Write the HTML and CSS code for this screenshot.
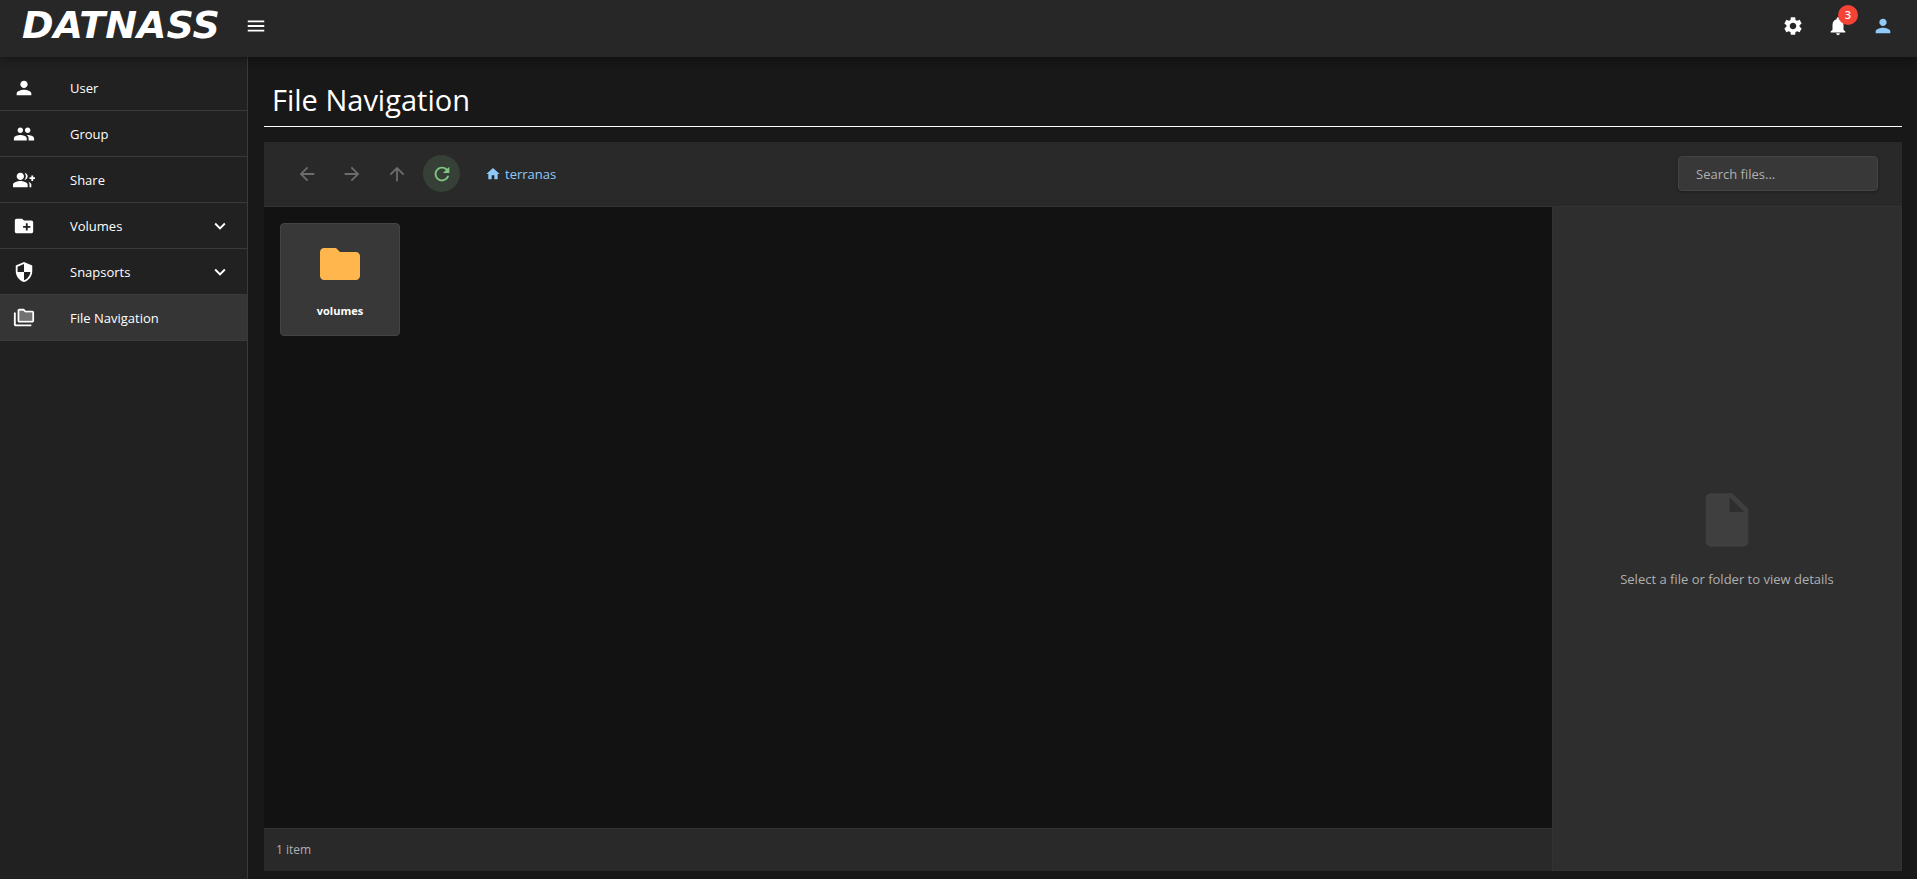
FILE: index.html
```
<!DOCTYPE html>
<html lang="en">
<head>
    <meta charset="UTF-8">
    <title>File Navigation</title>
    <link rel="stylesheet" href="styles.css">
</head>
<body>
    <header class="topbar">
        <a class="logo" href="#">DATNASS</a>
        <button type="button" class="icon-btn" aria-label="Toggle menu">
            <svg viewBox="0 0 24 24"><path d="M3 18h18v-2H3zm0-5h18v-2H3zm0-7v2h18V6z"/></svg>
        </button>
        <div class="topbar-actions">
            <button type="button" class="icon-btn" aria-label="Settings">
                <svg viewBox="0 0 24 24"><path d="M19.14 12.94c.04-.3.06-.61.06-.94 0-.32-.02-.64-.07-.94l2.03-1.58c.18-.14.23-.41.12-.61l-1.92-3.32c-.12-.22-.37-.29-.59-.22l-2.39.96c-.5-.38-1.03-.7-1.62-.94l-.36-2.54c-.04-.24-.24-.41-.48-.41h-3.84c-.24 0-.43.17-.47.41l-.36 2.54c-.59.24-1.13.57-1.62.94l-2.39-.96c-.22-.08-.47 0-.59.22L2.74 8.87c-.12.21-.08.47.12.61l2.03 1.58c-.05.3-.09.63-.09.94s.02.64.07.94l-2.03 1.58c-.18.14-.23.41-.12.61l1.92 3.32c.12.22.37.29.59.22l2.39-.96c.5.38 1.03.7 1.62.94l.36 2.54c.05.24.24.41.48.41h3.84c.24 0 .44-.17.47-.41l.36-2.54c.59-.24 1.13-.56 1.62-.94l2.39.96c.22.08.47 0 .59-.22l1.92-3.32c.12-.22.07-.47-.12-.61zM12 15.6c-1.98 0-3.6-1.62-3.6-3.6s1.62-3.6 3.6-3.6 3.6 1.62 3.6 3.6-1.62 3.6-3.6 3.6"/></svg>
            </button>
            <button type="button" class="icon-btn" aria-label="Notifications">
                <svg viewBox="0 0 24 24"><path d="M12 22c1.1 0 2-.9 2-2h-4c0 1.1.89 2 2 2m6-6v-5c0-3.07-1.64-5.64-4.5-6.32V4c0-.83-.67-1.5-1.5-1.5s-1.5.67-1.5 1.5v.68C7.63 5.36 6 7.92 6 11v5l-2 2v1h16v-1z"/></svg>
                <span class="badge">3</span>
            </button>
            <button type="button" class="icon-btn account" aria-label="Account">
                <svg viewBox="0 0 24 24"><path d="M12 12c2.21 0 4-1.79 4-4s-1.79-4-4-4-4 1.79-4 4 1.79 4 4 4m0 2c-2.67 0-8 1.34-8 4v2h16v-2c0-2.66-5.33-4-8-4"/></svg>
            </button>
        </div>
    </header>

    <div class="layout">
        <nav class="sidebar">
            <a class="nav-item" href="#">
                <svg viewBox="0 0 24 24"><path d="M12 12c2.21 0 4-1.79 4-4s-1.79-4-4-4-4 1.79-4 4 1.79 4 4 4m0 2c-2.67 0-8 1.34-8 4v2h16v-2c0-2.66-5.33-4-8-4"/></svg>
                <span>User</span>
            </a>
            <a class="nav-item" href="#">
                <svg viewBox="0 0 24 24"><path d="M16 11c1.66 0 2.99-1.34 2.99-3S17.66 5 16 5s-3 1.34-3 3 1.34 3 3 3m-8 0c1.66 0 2.99-1.34 2.99-3S9.66 5 8 5 5 6.34 5 8s1.34 3 3 3m0 2c-2.33 0-7 1.17-7 3.5V19h14v-2.5c0-2.33-4.67-3.5-7-3.5m8 0c-.29 0-.62.02-.97.05 1.16.84 1.97 1.97 1.97 3.45V19h6v-2.5c0-2.33-4.67-3.5-7-3.5"/></svg>
                <span>Group</span>
            </a>
            <a class="nav-item" href="#">
                <svg viewBox="0 0 24 24"><path d="M22 9V7h-2v2h-2v2h2v2h2v-2h2V9zM8 12c2.21 0 4-1.79 4-4s-1.79-4-4-4-4 1.79-4 4 1.79 4 4 4m0 1c-2.67 0-8 1.34-8 4v3h16v-3c0-2.66-5.33-4-8-4m4.51-8.95C13.43 5.11 14 6.49 14 8s-.57 2.89-1.49 3.95C14.47 11.7 16 10.04 16 8s-1.53-3.7-3.49-3.95m4.02 9.78C17.42 14.66 18 15.7 18 17v3h2v-3c0-1.45-1.59-2.51-3.47-3.17"/></svg>
                <span>Share</span>
            </a>
            <a class="nav-item" href="#">
                <svg viewBox="0 0 24 24"><path d="M20 6h-8l-2-2H4c-1.11 0-1.99.89-1.99 2L2 18c0 1.11.89 2 2 2h16c1.11 0 2-.89 2-2V8c0-1.11-.89-2-2-2m-1 8h-3v3h-2v-3h-3v-2h3V9h2v3h3z"/></svg>
                <span>Volumes</span>
                <svg class="chevron" viewBox="0 0 24 24"><path d="M7.41 8.59 12 13.17l4.59-4.58L18 10l-6 6-6-6z"/></svg>
            </a>
            <a class="nav-item" href="#">
                <svg viewBox="0 0 24 24"><path d="M12 1 3 5v6c0 5.55 3.84 10.74 9 12 5.16-1.26 9-6.45 9-12V5zm0 10.99h7c-.53 4.12-3.28 7.79-7 8.94V12H5V6.3l7-3.11z"/></svg>
                <span>Snapsorts</span>
                <svg class="chevron" viewBox="0 0 24 24"><path d="M7.41 8.59 12 13.17l4.59-4.58L18 10l-6 6-6-6z"/></svg>
            </a>
            <a class="nav-item active" href="#">
                <svg viewBox="0 0 24 24"><path opacity=".3" d="M13.17 6l-2-2H7v11h14V6z"/><path d="M3 6H1v13c0 1.1.9 2 2 2h17v-2H3zm18-2h-7l-2-2H7c-1.1 0-1.99.9-1.99 2L5 15c0 1.1.9 2 2 2h14c1.1 0 2-.9 2-2V6c0-1.1-.9-2-2-2m0 11H7V4h4.17l2 2H21z"/></svg>
                <span>File Navigation</span>
            </a>
        </nav>

        <main class="main">
            <h1 class="page-title">File Navigation</h1>

            <div class="explorer">
                <div class="toolbar">
                    <button type="button" class="tool-btn" aria-label="Back" disabled>
                        <svg viewBox="0 0 24 24"><path d="M20 11H7.83l5.59-5.59L12 4l-8 8 8 8 1.41-1.41L7.83 13H20z"/></svg>
                    </button>
                    <button type="button" class="tool-btn" aria-label="Forward" disabled>
                        <svg viewBox="0 0 24 24"><path d="m12 4-1.41 1.41L16.17 11H4v2h12.17l-5.58 5.59L12 20l8-8z"/></svg>
                    </button>
                    <button type="button" class="tool-btn" aria-label="Up" disabled>
                        <svg viewBox="0 0 24 24"><path d="m4 12 1.41 1.41L11 7.83V20h2V7.83l5.58 5.59L20 12l-8-8z"/></svg>
                    </button>
                    <button type="button" class="tool-btn refresh" aria-label="Refresh">
                        <svg viewBox="0 0 24 24"><path d="M17.65 6.35C16.2 4.9 14.21 4 12 4c-4.42 0-7.99 3.58-7.99 8s3.57 8 7.99 8c3.73 0 6.84-2.55 7.73-6h-2.08c-.82 2.33-3.04 4-5.65 4-3.31 0-6-2.69-6-6s2.69-6 6-6c1.66 0 3.14.69 4.22 1.78L13 11h7V4z"/></svg>
                    </button>
                    <a class="crumb" href="#">
                        <svg viewBox="0 0 24 24"><path d="M10 20v-6h4v6h5v-8h3L12 3 2 12h3v8z"/></svg>
                        <span>terranas</span>
                    </a>
                    <input class="search" type="text" placeholder="Search files..." aria-label="Search files">
                </div>

                <div class="explorer-body">
                    <section class="files">
                        <div class="file-grid">
                            <button type="button" class="file-card">
                                <svg viewBox="0 0 24 24"><path d="M10 4H4c-1.1 0-1.99.9-1.99 2L2 18c0 1.1.9 2 2 2h16c1.1 0 2-.9 2-2V8c0-1.1-.9-2-2-2h-8z"/></svg>
                                <span>volumes</span>
                            </button>
                        </div>
                        <footer class="status">1 item</footer>
                    </section>

                    <aside class="details">
                        <svg viewBox="0 0 24 24"><path d="M6 2c-1.1 0-1.99.9-1.99 2L4 20c0 1.1.89 2 1.99 2H18c1.1 0 2-.9 2-2V8l-6-6zm7 7V3.5L18.5 9z"/></svg>
                        <p>Select a file or folder to view details</p>
                    </aside>
                </div>
            </div>
        </main>
    </div>
</body>
</html>
```
FILE: styles.css
```
* {
    box-sizing: border-box;
}
body {
    margin: 0;
    height: 100vh;
    display: flex;
    flex-direction: column;
    background-color: #181818;
    color: #fff;
    font-family: "Open Sans", "Noto Sans", sans-serif;
    font-size: 13px;
}
a {
    color: inherit;
    text-decoration: none;
}
button {
    font: inherit;
    color: inherit;
    border: none;
    background: none;
    padding: 0;
    cursor: pointer;
}
svg {
    width: 22px;
    height: 22px;
    fill: currentColor;
    flex-shrink: 0;
}

/* Top bar */
.topbar {
    display: flex;
    align-items: center;
    padding: 7px 16px 13px 22px;
    background-color: #272727;
    box-shadow: 0 2px 8px rgba(0, 0, 0, 0.4);
    z-index: 1;
}
.logo {
    width: 215px;
    font-family: "DejaVu Sans", sans-serif;
    font-size: 38px;
    line-height: 37px;
    font-weight: bold;
    font-style: italic;
}
.icon-btn,
.tool-btn {
    display: flex;
    align-items: center;
    justify-content: center;
    width: 37px;
    height: 37px;
    border-radius: 50%;
    position: relative;
}
.topbar-actions {
    display: flex;
    gap: 8px;
    margin-left: auto;
}
.account {
    color: #90caf9;
}
.badge {
    position: absolute;
    top: -2px;
    right: -2px;
    width: 20px;
    height: 20px;
    border-radius: 50%;
    background-color: #f44336;
    font-size: 11px;
    line-height: 19px;
    font-weight: 600;
    text-align: center;
}

/* Sidebar */
.layout {
    flex: 1;
    display: flex;
    min-height: 0;
}
.sidebar {
    width: 248px;
    padding-top: 8px;
    background-color: #212121;
    border-right: 1px solid #3a3a3a;
}
.nav-item {
    display: flex;
    align-items: center;
    height: 46px;
    padding: 0 16px 0 13px;
    border-bottom: 1px solid #3a3a3a;
}
.nav-item span {
    margin-left: 35px;
}
.nav-item.active {
    background-color: #353535;
}
.chevron {
    margin-left: auto;
}

/* Main */
.main {
    flex: 1;
    display: flex;
    flex-direction: column;
    min-width: 0;
    padding: 16px 15px 8px 16px;
}
.page-title {
    margin: 0 0 15px;
    padding: 0 8px;
    border-bottom: 1px solid #fff;
    font-size: 29px;
    line-height: 53px;
    font-weight: 400;
}
.explorer {
    flex: 1;
    display: flex;
    flex-direction: column;
    background-color: #121212;
}
.toolbar {
    display: flex;
    align-items: center;
    gap: 8px;
    height: 65px;
    padding: 0 24px 1px;
    background-color: #292929;
    border-bottom: 1px solid #333;
}
.tool-btn:disabled {
    color: #6c6c6c;
}
.refresh {
    color: #81c784;
    background-color: #364036;
}
.crumb {
    display: flex;
    align-items: center;
    gap: 4px;
    margin-left: 17px;
    color: #90caf9;
}
.crumb svg {
    width: 16px;
    height: 16px;
}
.search {
    width: 200px;
    height: 35px;
    margin-left: auto;
    padding: 0 17px;
    border: 1px solid #444;
    border-radius: 4px;
    background-color: #383838;
    box-shadow: 0 1px 3px rgba(0, 0, 0, 0.3);
    color: #fff;
    font: inherit;
}
.search::placeholder {
    color: #b0b0b0;
}
.explorer-body {
    flex: 1;
    display: flex;
}
.files {
    flex: 1;
    display: flex;
    flex-direction: column;
}
.file-grid {
    flex: 1;
    display: grid;
    grid-template-columns: repeat(auto-fill, 120px);
    align-content: start;
    gap: 16px;
    padding: 16px;
}
.file-card {
    display: flex;
    flex-direction: column;
    align-items: center;
    gap: 13px;
    padding: 16px 8px 15px;
    border: 1px solid #444;
    border-radius: 4px;
    background-color: #383838;
    font-size: 11px;
    line-height: 19px;
    font-weight: bold;
}
.file-card svg {
    width: 48px;
    height: 48px;
    color: #ffb74d;
}
.status {
    height: 43px;
    padding: 0 12px;
    border-top: 1px solid #333;
    background-color: #292929;
    color: #b0b0b0;
    font-size: 12px;
    line-height: 42px;
}
.details {
    width: 350px;
    display: flex;
    flex-direction: column;
    align-items: center;
    justify-content: center;
    gap: 16px;
    border: 1px solid #333;
    border-top: none;
    background-color: #2e2e2e;
    color: #b0b0b0;
}
.details svg {
    width: 64px;
    height: 64px;
    color: #3f3f3f;
}
.details p {
    margin: 0;
    line-height: 22px;
}
```
